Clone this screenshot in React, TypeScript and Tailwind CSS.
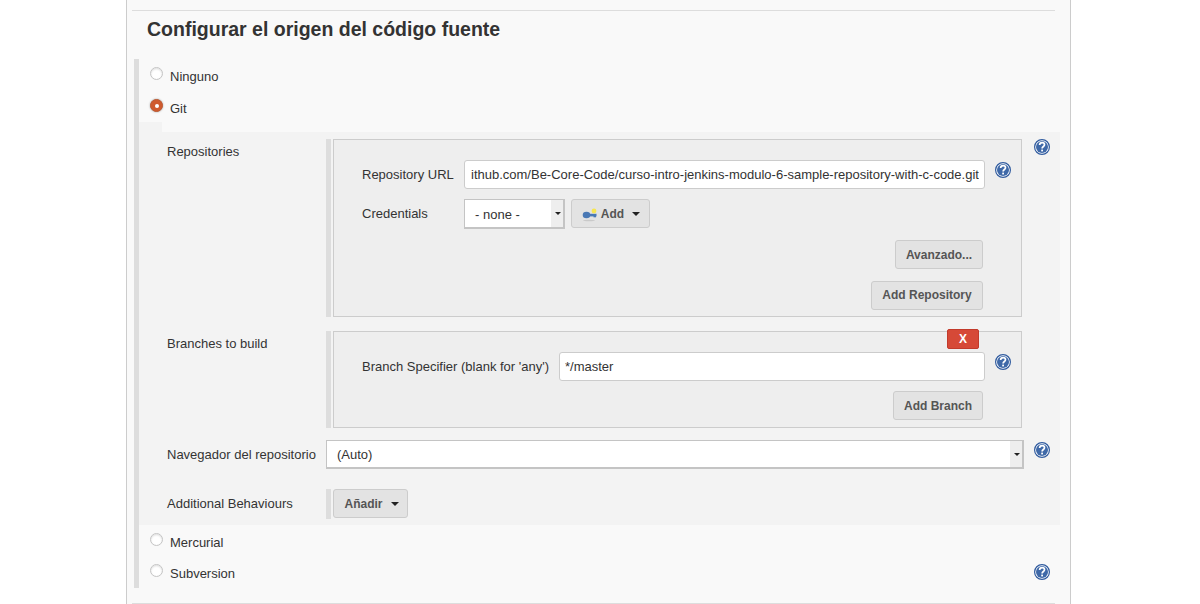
function HelpIcon({ className = '' }: { className?: string }) {
  return (
    <svg viewBox="0 0 16 16" className={`h-4 w-4 shrink-0 ${className}`}>
      <circle cx="8" cy="8" r="7.4" fill="#fff" stroke="#2f5a9e" strokeWidth="1.2" />
      <circle cx="8" cy="8" r="6" fill="#3f69a8" />
      <path d="M5.6 6c.1-1.5 1.1-2.3 2.5-2.3 1.4 0 2.4.9 2.4 2.1 0 1.8-2.4 1.7-2.4 3.7" fill="none" stroke="#fff" strokeWidth="1.7" />
      <rect x="7.2" y="10.6" width="1.8" height="1.8" fill="#fff" />
    </svg>
  );
}

function KeyIcon() {
  return (
    <svg viewBox="0 0 16 16" className="h-4 w-4 shrink-0">
      <ellipse cx="7" cy="14.5" rx="6" ry="0.8" fill="#c9c9c9" />
      <ellipse cx="4.5" cy="9" rx="3.8" ry="3.2" fill="#4a79b5" />
      <rect x="6" y="7.8" width="8.5" height="2.6" fill="#4a79b5" />
      <rect x="11.5" y="9.8" width="2.5" height="1.5" fill="#4a79b5" />
      <circle cx="12" cy="5" r="2.4" fill="#f7e651" />
    </svg>
  );
}

function Caret({ className = '' }: { className?: string }) {
  return <span className={`inline-block h-0 w-0 border-x-4 border-t-4 border-x-transparent border-t-[#222] ${className}`} />;
}

function Radio({ label, checked, help, className = '' }: { label: string; checked?: boolean; help?: boolean; className?: string }) {
  return (
    <div className={`flex h-[18px] items-center pl-[11px] ${className}`}>
      {checked ? (
        <span className="mb-[7px] flex h-[13px] w-[13px] items-center justify-center rounded-full border border-[#bf5a32] bg-[#cf5a2e] shadow-[0_0_2px_#999]">
          <span className="h-[4px] w-[4px] rounded-full bg-white" />
        </span>
      ) : (
        <span className="mb-[7px] h-[13px] w-[13px] rounded-full border border-[#c4c4c4] bg-white shadow-[inset_0_1px_2px_#ddd]" />
      )}
      <span className="ml-[7px]">{label}</span>
      {help && <HelpIcon className="mb-[5px] ml-auto mr-[20px]" />}
    </div>
  );
}

function Btn({ children, className = '' }: { children: React.ReactNode; className?: string }) {
  return (
    <div className={`flex h-[29px] items-center justify-center rounded-[3px] border border-[#ccc] bg-[#e3e3e3] text-[12px] font-bold text-[#555] ${className}`}>
      {children}
    </div>
  );
}

function TextField({ value, className = '' }: { value: string; className?: string }) {
  return (
    <input
      readOnly
      value={value}
      className={`h-[29px] rounded-[3px] border border-[#ccc] bg-white pr-[5px] text-[13px] text-[#333] outline-none ${className}`}
    />
  );
}

function FakeSelect({ value, className = '', pad }: { value: string; className?: string; pad: string }) {
  return (
    <div className={`flex border border-b-2 border-r-2 border-[#c4c4c4] bg-white ${className}`}>
      <span className={`flex flex-1 items-center ${pad}`}>{value}</span>
      <span className="flex w-[12px] items-center justify-center bg-[#eee] pl-[1px]">
        <Caret className="!border-x-[3px] !border-t-[3px]" />
      </span>
    </div>
  );
}

export default function App() {
  return (
    <div className="h-[604px] w-[1200px] overflow-hidden bg-white font-['Liberation_Sans',sans-serif] text-[13px] text-[#333]">
      <div className="ml-[126px] h-[604px] w-[945px] border-x border-[#ccc] bg-[#f9f9f9] pl-[5px] pt-[10px]">
        <div className="mr-[15px] border-t border-[#ddd] pl-[15px] pt-[6px]">
          <h1 className="text-[19.5px] font-bold leading-[24px]">Configurar el origen del código fuente</h1>
        </div>

        <div className="ml-[2px] mt-[18px] h-[529px] border-l-[5px] border-[#ddd] pt-[9px]">
          <Radio label="Ninguno" />
          <Radio label="Git" checked className="mt-[14px]" />

          <div className="mt-[4px] h-[10px] w-[23px] bg-[#f3f3f3]" />
          <div className="w-[921px] bg-[#f3f3f3] pb-[6px] pl-[28px] pt-[7px]">
            <div className="flex items-start">
              <div className="w-[159px] pt-[3px]">Repositories</div>
              <div className="mr-[2px] h-[178px] w-[5px] bg-[#ddd]" />
              <div className="h-[178px] w-[689px] border border-[#ccc] bg-[#eee] pl-[28px] pt-[20px]">
                <div className="flex items-start">
                  <label className="flex h-[29px] w-[102px] items-center">Repository URL</label>
                  <TextField value="ithub.com/Be-Core-Code/curso-intro-jenkins-modulo-6-sample-repository-with-c-code.git" className="w-[521px] pl-[6px]" />
                  <HelpIcon className="ml-[10px] mt-[2px]" />
                </div>
                <div className="mt-[10px] flex items-start">
                  <label className="flex h-[29px] w-[102px] items-center">Credentials</label>
                  <FakeSelect value="- none -" className="h-[30px] w-[101px]" pad="pl-[10px] pt-[2px]" />
                  <Btn className="ml-[6px] w-[79px] gap-[3px] pl-[1px]">
                    <KeyIcon />
                    <span>Add</span>
                    <Caret className="ml-[5px]" />
                  </Btn>
                </div>
                <div className="mr-[38px] mt-[11px] flex flex-col items-end gap-[12px]">
                  <Btn className="w-[88px]">Avanzado...</Btn>
                  <Btn className="w-[112px] pb-[1px]">Add Repository</Btn>
                </div>
              </div>
              <HelpIcon className="ml-[12px]" />
            </div>

            <div className="mt-[14px] flex items-start">
              <div className="w-[159px] pt-[3px]">Branches to build</div>
              <div className="mr-[2px] h-[97px] w-[5px] bg-[#ddd]" />
              <div className="relative h-[97px] w-[689px] border border-[#ccc] bg-[#eee] pl-[28px] pt-[20px]">
                <div className="absolute left-[613px] top-[-3px] flex h-[20px] w-[32px] items-center justify-center rounded-[2px] border border-[#c23a2b] bg-[#d64937] text-[12px] font-bold text-white">X</div>
                <div className="flex items-start">
                  <label className="flex h-[29px] w-[197px] items-center">Branch Specifier (blank for 'any')</label>
                  <TextField value="*/master" className="w-[426px] pl-[5px]" />
                  <HelpIcon className="ml-[10px] mt-[2px]" />
                </div>
                <div className="mr-[38px] mt-[10px] flex justify-end">
                  <Btn className="w-[90px]">Add Branch</Btn>
                </div>
              </div>
            </div>

            <div className="mt-[12px] flex items-start">
              <div className="flex h-[29px] w-[159px] items-center">Navegador del repositorio</div>
              <FakeSelect value="(Auto)" className="h-[29px] w-[698px]" pad="pl-[10px] pt-[2px]" />
              <HelpIcon className="ml-[10px] mt-[2px]" />
            </div>

            <div className="mt-[20px] flex items-start">
              <div className="flex h-[29px] w-[159px] items-center">Additional Behaviours</div>
              <div className="mr-[2px] h-[30px] w-[5px] bg-[#ddd]" />
              <Btn className="w-[75px] gap-[8px] pl-[2px]">
                <span>Añadir</span>
                <Caret />
              </Btn>
            </div>
          </div>

          <Radio label="Mercurial" className="mt-[9px]" />
          <Radio label="Subversion" help className="mt-[13px]" />
        </div>

        <div className="mr-[15px] mt-[15px] border-t border-[#ddd]" />
      </div>
    </div>
  );
}
